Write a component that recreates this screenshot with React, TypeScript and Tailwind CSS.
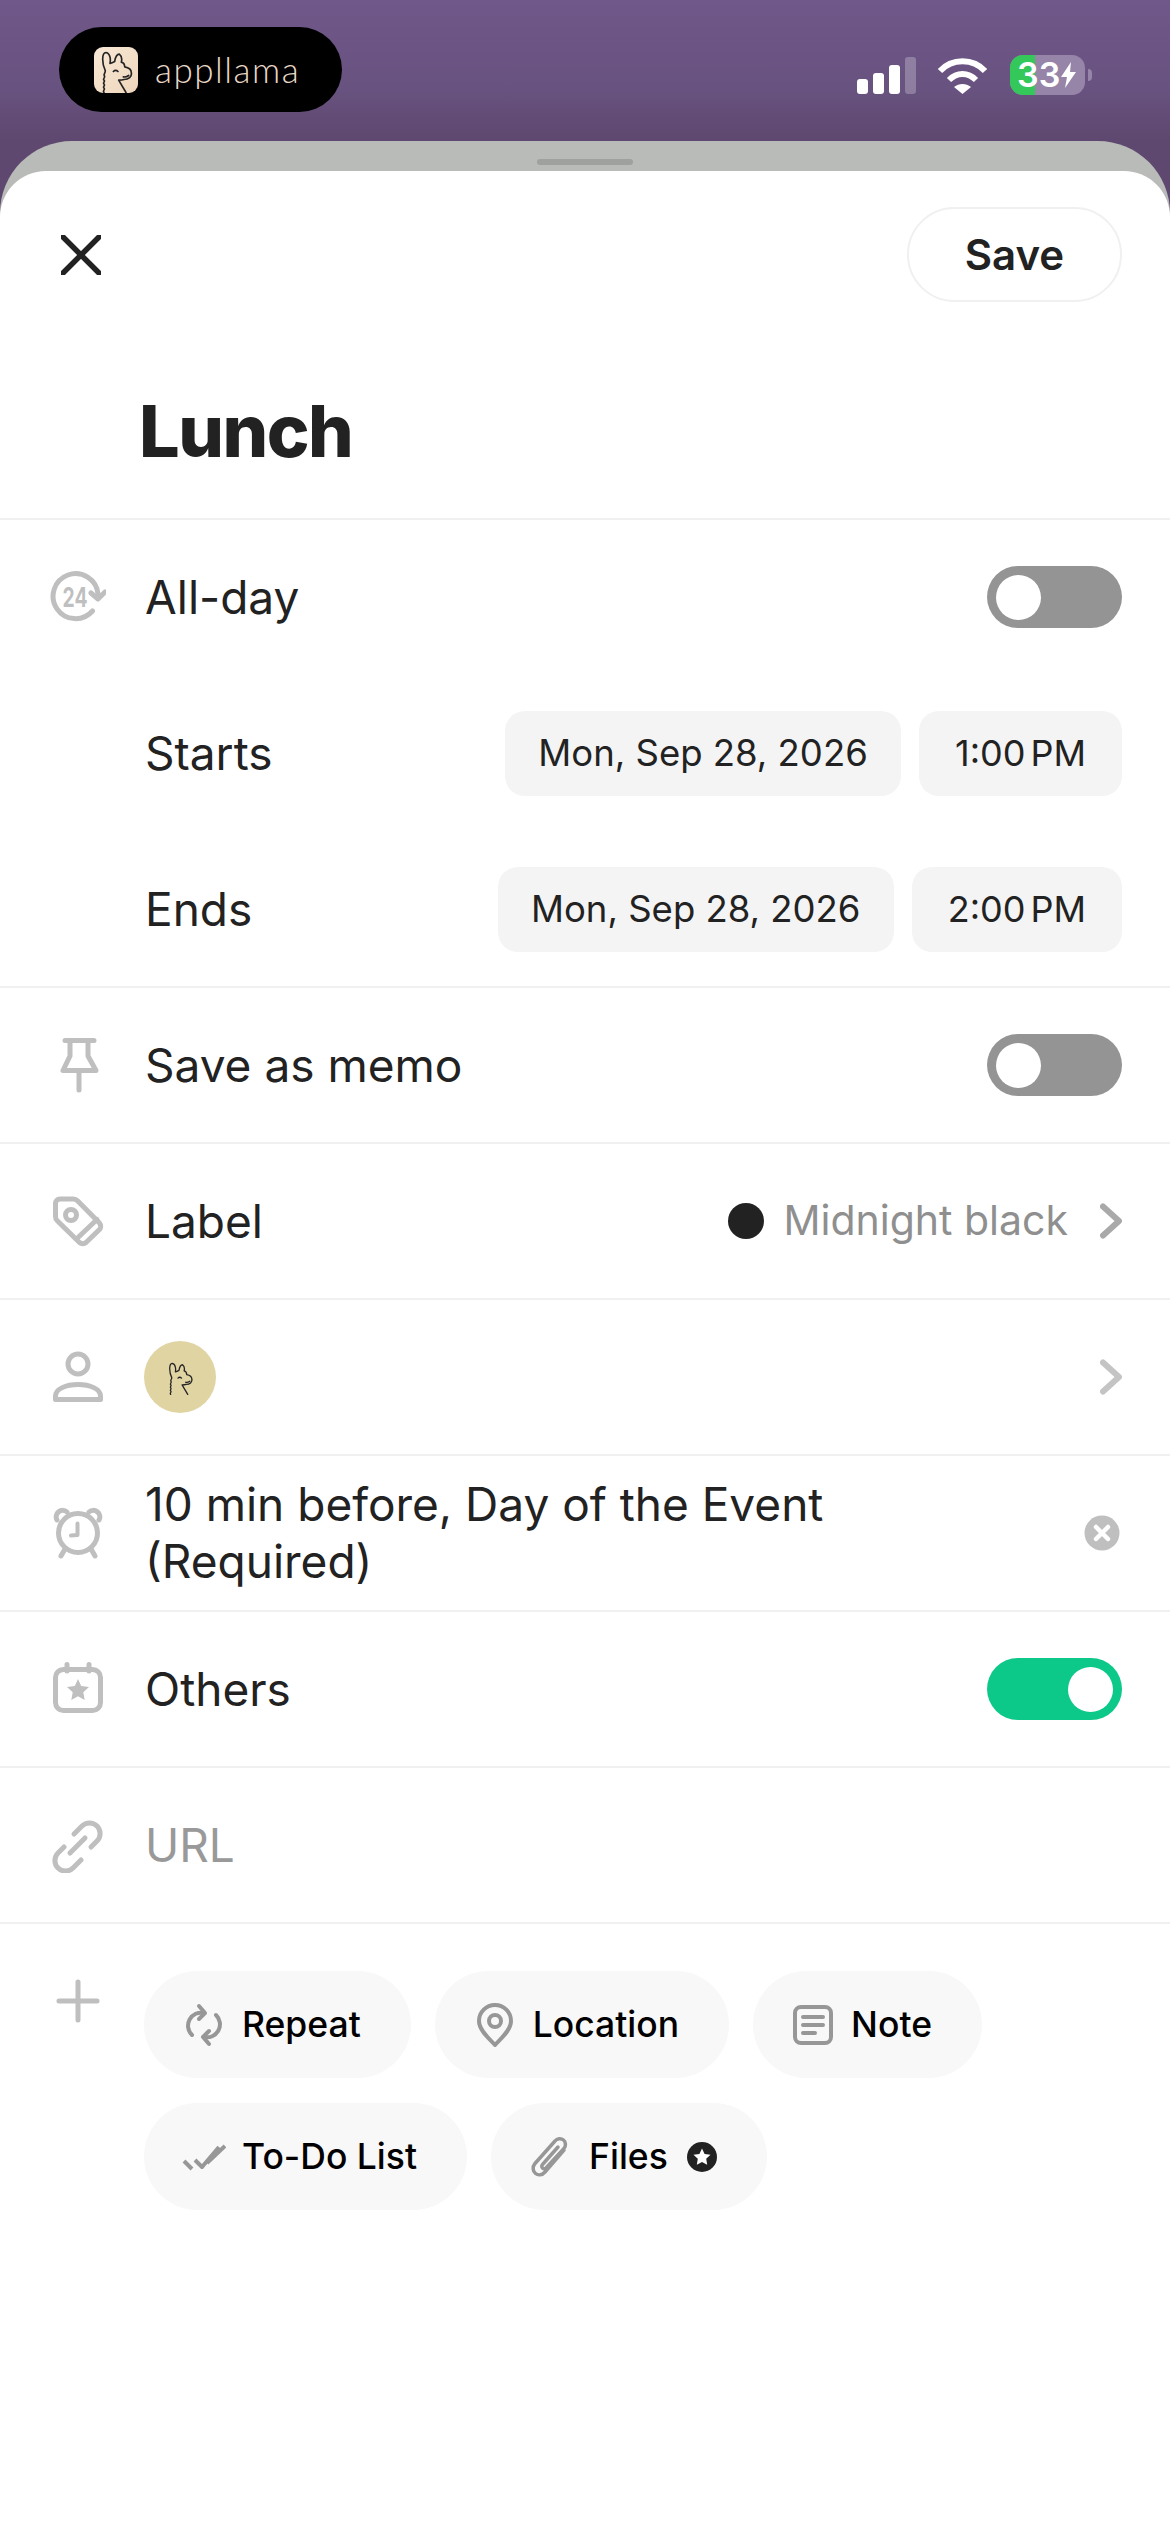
import React from 'react';

const Llama = ({ className, strokeWidth = 4 }: { className?: string; strokeWidth?: number }) => (
  <svg viewBox="0 0 132 135" className={className} fill="none" stroke="#242424" strokeWidth={strokeWidth} strokeLinecap="round" strokeLinejoin="round">
    <path d="M30 135c-6-5 5-9 0-13c-5-4 5-8 0-12c-5-4 5-8 0-12c-5-4 5-8 1-13c-3-5 3-8 3-15C24 50 22 16 36 15C50 18 50 38 48 48C54 46 58 44 62 42C64 30 70 20 76 20C84 26 84 36 82 44C90 46 92 54 92 58C104 60 112 66 112 76C114 88 104 96 90 96C84 98 78 98 74 98L96 135" />
    <path d="M58 72q7-7 14 0M88 88q8 2 16-4" />
  </svg>
);

const Icon = ({ children }: { children: React.ReactNode }) => (
  <div className="w-[145px] pl-[50px] shrink-0">
    <svg viewBox="0 0 56 56" className="w-[56px] h-[56px]" fill="none" stroke="#bfbfbf" strokeWidth={5} strokeLinecap="round" strokeLinejoin="round">
      {children}
    </svg>
  </div>
);

const ChipIcon = ({ children }: { children: React.ReactNode }) => (
  <svg viewBox="0 0 44 44" className="w-[44px] h-[44px] shrink-0" fill="none" stroke="#979797" strokeWidth={4} strokeLinecap="round" strokeLinejoin="round">
    {children}
  </svg>
);

const Toggle = ({ on }: { on?: boolean }) => (
  <div className={`w-[135px] h-[62px] rounded-full p-[9px] flex ${on ? 'bg-[#0cc989] justify-end' : 'bg-[#949494] justify-start'}`}>
    <div className="w-[45px] h-[45px] rounded-full bg-white" />
  </div>
);

const Chevron = ({ color }: { color: string }) => (
  <svg viewBox="0 0 22 36" className="w-[22px] h-[36px]" fill="none" stroke={color} strokeWidth={6} strokeLinecap="round" strokeLinejoin="round">
    <path d="M3 3.500l16 14.500L3 32.500" />
  </svg>
);

const Row = ({ children }: { children: React.ReactNode }) => (
  <div className="h-[156px] border-t-2 border-[#f0f0f0] flex items-center pr-[48px]">{children}</div>
);

const DateRow = ({ label, hour }: { label: string; hour: string }) => (
  <div className="h-[156px] pt-[2px] flex items-center pl-[145px] pr-[48px]">
    <span className="flex-1">{label}</span>
    <div className="h-[85px] rounded-[20px] bg-[#f4f4f4] w-[396px] flex items-center justify-center text-[36.500px]">Mon, Sep 28, 2026</div>
    <div className="h-[85px] rounded-[20px] bg-[#f4f4f4] px-[36px] ml-[18px] flex items-center text-[36px]">
      {hour}
      <span className="ml-[5px]">PM</span>
    </div>
  </div>
);

const Chip = ({ icon, label, badge }: { icon: React.ReactNode; label: string; badge?: boolean }) => (
  <div className="h-[107px] rounded-full bg-[#f8f8f8] pl-[38px] pr-[50px] flex items-center gap-[16px] text-[35.500px] font-medium text-black">
    {icon}
    <span>{label}</span>
    {badge && (
      <svg viewBox="0 0 30 30" className="w-[30px] h-[30px] ml-[3px]">
        <circle cx="15" cy="15" r="15" fill="#222" />
        <path d="M15 6.500l2.600 5.400 5.900.8-4.300 4.100 1 5.900-5.200-2.800-5.200 2.800 1-5.900-4.300-4.100 5.900-.8z" fill="#fff" />
      </svg>
    )}
  </div>
);

export default function App() {
  return (
    <div className="w-[1170px] h-[2532px] overflow-hidden font-['Inter',sans-serif] text-[#222] text-[46px] bg-[linear-gradient(180deg,#70588a_0px,#68527f_90px,#5e486f_141px,#5e486f_220px)]">
      {/* Status bar */}
      <div className="h-[141px] flex justify-between pl-[59px] pr-[78px] pt-[27px]">
        <div className="w-[283px] h-[85px] rounded-full bg-black flex items-center pl-[35px] gap-[17px]">
          <div className="w-[44px] h-[46px] rounded-[9px] bg-[linear-gradient(135deg,#f8e8d6,#eed6bc)] overflow-hidden">
            <Llama className="w-full h-full" strokeWidth={5} />
          </div>
          <span className="font-['Lato',sans-serif] font-light text-[35px] tracking-[1.500px] text-[#e9d8c6] leading-none">appllama</span>
        </div>
        <div className="flex items-start pt-[30px]">
          <div className="flex items-end gap-[5px] h-[37px]">
            <div className="w-[11px] h-[15px] rounded-[3px] bg-white" />
            <div className="w-[11px] h-[21px] rounded-[3px] bg-white" />
            <div className="w-[11px] h-[29px] rounded-[3px] bg-white" />
            <div className="w-[11px] h-[37px] rounded-[3px] bg-white/25" />
          </div>
          <svg viewBox="0 0 51 37" className="w-[51px] h-[37px] ml-[21px]" fill="none" stroke="#fff" strokeWidth={6}>
            <path d="M3 14C15 1 36 1 48 14" />
            <path d="M12 23C20 15 31 15 39 23" />
            <path d="M17 30C22 26 29 26 34 30L25.500 37Z" fill="#fff" stroke="none" />
          </svg>
          <div className="relative w-[75px] h-[40px] -mt-[2px] ml-[22px] rounded-[13px] overflow-hidden bg-[#9685a8]">
            <div className="absolute inset-y-0 left-0 w-[25px] bg-[#34c85a]" />
            <div className="absolute inset-0 flex items-center pl-[7px] text-white text-[34px] font-semibold leading-none">
              33
              <svg viewBox="0 0 16 26" className="w-[16px] h-[26px] ml-[1px]">
                <path d="M10 0L0 15h6L4 26 15 10H9z" fill="#fff" />
              </svg>
            </div>
          </div>
          <div className="w-[4px] h-[12px] mt-[12px] ml-[3px] rounded-r-full bg-[#9685a8]" />
        </div>
      </div>

      {/* Sheet behind */}
      <div className="bg-[#b9bbb8] rounded-t-[72px] pt-[30px] relative">
        <div className="absolute top-[18px] left-[537px] w-[96px] h-[6px] rounded-full bg-[#9fa19e]" />
        {/* Sheet */}
        <div className="bg-white rounded-t-[46px] h-[2361px]">
          <div className="flex justify-between items-start pt-[36px] pl-[61px] pr-[48px]">
            <svg viewBox="0 0 40 40" className="w-[40px] h-[40px] mt-[28px]" fill="none" stroke="#222" strokeWidth={5.500} strokeLinecap="round">
              <path d="M2 2l36 36M38 2L2 38" />
            </svg>
            <div className="w-[215px] h-[95px] rounded-full border-2 border-[#f0f0f0] flex items-center justify-center text-[42px] font-semibold">Save</div>
          </div>
          <div className="h-[216px] pl-[139px] pt-[84px] text-[72px] font-extrabold leading-[90px] tracking-[-1.500px]">Lunch</div>

          <Row>
            <Icon>
              <path d="M42.500 42A22.500 22.500 0 1 1 48 25" />
              <path d="M41 24l7 6 7-7" />
              <text x="25" y="38" textAnchor="middle" fontSize="27" fontWeight="700" fill="#bfbfbf" stroke="none" fontFamily="Inter, sans-serif" textLength="25" lengthAdjust="spacingAndGlyphs">24</text>
            </Icon>
            <span className="flex-1">All-day</span>
            <Toggle />
          </Row>
          <DateRow label="Starts" hour="1:00" />
          <DateRow label="Ends" hour="2:00" />
          <Row>
            <Icon>
              <path d="M15 3.500H44M20 3.500V19L13 33.500H46L38 19V3.500M29 33.500V53" />
            </Icon>
            <span className="flex-1">Save as memo</span>
            <Toggle />
          </Row>
          <Row>
            <Icon>
              <path d="M10 6H23a6 6 0 0 1 4.500 1.800L49.500 30a5 5 0 0 1 0 6.500L36 49.500a5 5 0 0 1-6.500 0L7.500 28A6 6 0 0 1 5.500 23.500V10.500a4.500 4.500 0 0 1 4.500-4.500z" />
              <circle cx="21" cy="22" r="5.500" />
              <path d="M28.500 44L47 26.500" />
            </Icon>
            <span className="flex-1">Label</span>
            <div className="w-[36px] h-[36px] rounded-full bg-[#222] mr-[19px]" />
            <span className="text-[#8f8f8f] text-[41px] mr-[32px]">Midnight black</span>
            <Chevron color="#a9a9a9" />
          </Row>
          <Row>
            <Icon>
              <circle cx="28" cy="15" r="10" />
              <path d="M5.500 50.500V47C5.500 40 16 35.500 28 35.500S50.500 40 50.500 47V50.500Z" />
            </Icon>
            <div className="flex-1">
              <div className="w-[72px] h-[72px] -ml-[1px] rounded-full bg-[#e0d4a3] flex items-center justify-center">
                <Llama className="w-[34px] h-[36px]" strokeWidth={5} />
              </div>
            </div>
            <Chevron color="#c4c4c4" />
          </Row>
          <Row>
            <Icon>
              <circle cx="28" cy="28" r="19.500" />
              <path d="M27.500 18.500V30L21 30.500" strokeWidth={4} />
              <path d="M7 15a6.500 6.500 0 0 1 10-8M49 15a6.500 6.500 0 0 0-10-8M15 44l-4 7M41 44l4 7" />
            </Icon>
            <div className="flex-1 leading-[57px]">
              10 min before, Day of the Event
              <br />
              (Required)
            </div>
            <svg viewBox="0 0 36 36" className="w-[36px] h-[36px] mr-[2px]">
              <circle cx="18" cy="18" r="17.500" fill="#bfbfbf" />
              <path d="M12 12l12 12M24 12L12 24" stroke="#fff" strokeWidth={4.500} strokeLinecap="round" />
            </svg>
          </Row>
          <Row>
            <Icon>
              <rect x="5.500" y="8.500" width="45" height="41" rx="8" />
              <path d="M17 3.500V10M39 3.500V10" />
              <path d="M28 18l3.200 7 7.800 1-5.700 5.300 1.400 7.700-6.700-3.800-6.700 3.800 1.400-7.700-5.700-5.300 7.800-1z" fill="#bfbfbf" stroke="none" />
            </Icon>
            <span className="flex-1">Others</span>
            <Toggle on />
          </Row>
          <Row>
            <Icon>
              <path d="M24 17L32 9A10.500 10.500 0 0 1 47 24L41 30" />
              <path d="M14 30L8 36A10.500 10.500 0 0 0 23 51L31 43" />
              <path d="M20 36L35 21" />
            </Icon>
            <span className="text-[#999]">URL</span>
          </Row>
          <div className="border-t-2 border-[#f0f0f0] flex items-start">
            <div className="w-[144px] pl-[50px] pt-[49px] shrink-0">
              <svg viewBox="0 0 56 56" className="w-[56px] h-[56px]" fill="none" stroke="#bfbfbf" strokeWidth={5} strokeLinecap="round">
                <path d="M28 9V47M9 28H47" />
              </svg>
            </div>
            <div className="flex flex-col gap-[25px] pt-[47px]">
              <div className="flex gap-[24px]">
                <Chip
                  label="Repeat"
                  icon={
                    <ChipIcon>
                      <path d="M10 32A13 13 0 0 1 22 10" />
                      <path d="M17 3l6 7-6 6" />
                      <path d="M34 12A13 13 0 0 1 22 34" />
                      <path d="M27 41l-6-7 6-6" />
                    </ChipIcon>
                  }
                />
                <Chip
                  label="Location"
                  icon={
                    <ChipIcon>
                      <path d="M22 42C18 37 6 28 6 18a16 16 0 0 1 32 0C38 28 26 37 22 42Z" />
                      <circle cx="22" cy="18" r="6" />
                    </ChipIcon>
                  }
                />
                <Chip
                  label="Note"
                  icon={
                    <ChipIcon>
                      <rect x="4" y="4" width="36" height="36" rx="6" />
                      <path d="M12 14H32M12 22H32M12 30H24" />
                    </ChipIcon>
                  }
                />
              </div>
              <div className="flex gap-[24px]">
                <Chip
                  label="To-Do List"
                  icon={
                    <ChipIcon>
                      <path d="M2 26l8 8M13 25l7 7L37 12M25 28l18-17" strokeLinecap="butt" />
                    </ChipIcon>
                  }
                />
                <Chip
                  label="Files"
                  badge
                  icon={
                    <ChipIcon>
                      <path d="M35 15L16 37c-3 3.500-7 3.500-9.500 1.500S3 32 6 28.500L26 6c2-2.500 6-3 8.500-1s2.500 6 .5 8.500L17 33c-1 1-2.500 1-3.500 0s-1-2.500 0-3.500L29 12" strokeWidth={3.500} />
                    </ChipIcon>
                  }
                />
              </div>
            </div>
          </div>
        </div>
      </div>
    </div>
  );
}
